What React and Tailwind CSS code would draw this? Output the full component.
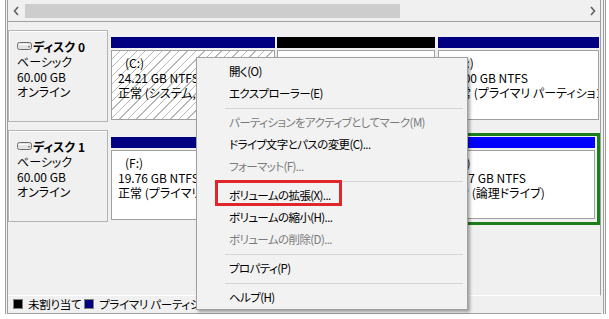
const MENU = [
  { label: "開く(O)" },
  { label: "エクスプローラー(E)" },
  { sep: true },
  { label: "パーティションをアクティブとしてマーク(M)", disabled: true },
  { label: "ドライブ文字とパスの変更(C)..." },
  { label: "フォーマット(F)...", disabled: true },
  { sep: true },
  { label: "ボリュームの拡張(X)..." },
  { label: "ボリュームの縮小(H)..." },
  { label: "ボリュームの削除(D)...", disabled: true },
  { sep: true },
  { label: "プロパティ(P)" },
  { sep: true },
  { label: "ヘルプ(H)" },
];

const LEGEND = [
  { label: "未割り当て", color: "bg-black" },
  { label: "プライマリ パーティション", color: "bg-[#000080]" },
  { label: "拡張パーティション", color: "bg-[#1b7d1b]" },
  { label: "空き領域", color: "bg-[#80ff80]" },
  { label: "論理ドライブ", color: "bg-[#0000ff]" },
];

const HATCH =
  "bg-[repeating-linear-gradient(135deg,#ffffff_0px,#ffffff_5px,#b8b8b8_5px,#b8b8b8_6px)]";

export default function App() {
  return (
    <div className="relative h-[319px] w-[609px] overflow-hidden bg-white text-black [font-family:'Noto_Sans_CJK_JP',sans-serif] [font-feature-settings:'palt']">
      <div className="ml-[5px] flex h-[314px] w-[601px] flex-col border-x-[3px] border-double border-[#a0a0a0] bg-[#f0f0f0]">
        <ScrollBar />

        <div className="mr-[2px] flex h-[275px] flex-col border-r border-b border-r-[#a0a0a0] border-b-white pt-[8px]">
          <div className="flex h-[92px] items-start">
            <DiskLabel name="ディスク 0" />
            <div className="ml-[3px] flex">
              <Partition
                className="w-[164px]"
                bar="bg-[#000080]"
                body={`px-[6px] ${HATCH}`}
                lines={["(C:)", "24.21 GB NTFS", "正常 (システム, ブート, ページ ファイル, アクティブ, クラッシュ ダンプ, プライマリ パーティション)"]}
              />
              <Partition
                className="ml-[2px] w-[158px]"
                bar="bg-black"
                body="bg-white px-[6px]"
                lines={["", "15.00 GB", "未割り当て"]}
              />
              <Partition
                className="ml-[3px] w-[161px]"
                bar="bg-[#000080]"
                body="bg-white pl-[8px] pr-[6px]"
                lines={["(D:)", "10.00 GB NTFS", "正常 (プライマリ パーティション)"]}
              />
            </div>
          </div>

          <div className="mt-[8px] flex h-[92px] items-start">
            <DiskLabel name="ディスク 1" />
            <div className="ml-[3px] flex items-start">
              <Partition
                className="w-[324px]"
                bar="bg-[#000080]"
                body="bg-white px-[6px]"
                lines={["(F:)", "19.76 GB NTFS", "正常 (プライマリ パーティション)"]}
              />
              <div className="ml-[2px] mt-[3px] flex h-[92px] w-[163px] flex-col border-[3px] border-[#1b7d1b] bg-[#f0f0f0] px-[2px] pt-[1px]">
                <div className="h-[11px] bg-[#0000ff]" />
                <PartBody
                  className="h-[69px] bg-white pl-[2px] pr-[6px]"
                  lines={["(E:)", "40.17 GB NTFS", "正常 (論理ドライブ)"]}
                />
              </div>
            </div>
          </div>
        </div>

        <div className="mr-[2px] flex flex-1 items-center border-b border-[#a0a0a0] pl-[5px] text-[11.5px] tracking-[-0.3px] whitespace-nowrap">
          {LEGEND.map((l) => (
            <div key={l.label} className="mr-[3px] flex items-center">
              <span className={`mr-[5px] h-[10px] w-[10px] border border-[#808080] ${l.color}`} />
              {l.label}
            </div>
          ))}
        </div>
      </div>

      <ContextMenu />
    </div>
  );
}

function ScrollBar() {
  return (
    <div className="mr-[2px] flex h-[22px] shrink-0 items-center border-r border-b border-[#a0a0a0] bg-[#f0f0f0]">
      <div className="flex w-[15px] justify-center">
        <svg width="6" height="10" viewBox="0 0 6 10">
          <path d="M5 1 L1.5 5 L5 9" fill="none" stroke="#606060" strokeWidth="1.6" />
        </svg>
      </div>
      <div className="ml-[2px] h-[14px] w-[375px] bg-[#cdcdcd]" />
      <div className="flex-1" />
      <div className="flex w-[15px] justify-center">
        <svg width="6" height="10" viewBox="0 0 6 10">
          <path d="M1 1 L4.5 5 L1 9" fill="none" stroke="#606060" strokeWidth="1.6" />
        </svg>
      </div>
    </div>
  );
}

function DiskIcon() {
  return (
    <svg width="15" height="8" viewBox="0 0 15 8" className="mr-px">
      <rect x="0.5" y="0.5" width="14" height="7" rx="2" fill="#e4e4e4" stroke="#6e6e6e" />
      <rect x="2" y="2" width="9" height="1" fill="#ffffff" />
      <rect x="11" y="4" width="2" height="1.5" fill="#8a8a8a" />
    </svg>
  );
}

function DiskLabel({ name }) {
  return (
    <div className="h-[92px] w-[100px] shrink-0 border border-[#b4b4b4] bg-[#f0f0f0] pl-[8px] pt-[7px] text-[12px] leading-[15px] shadow-[inset_1px_1px_0_#ffffff]">
      <div className="flex h-[16px] items-center font-bold">
        <DiskIcon />
        <span>{name}</span>
      </div>
      <div>ベーシック</div>
      <div>60.00 GB</div>
      <div>オンライン</div>
    </div>
  );
}

function PartBody({ className, lines }) {
  return (
    <div
      className={`mt-[2px] overflow-hidden border border-[#a0a0a0] pt-[4px] text-[12px] leading-[15px] whitespace-nowrap ${className}`}
    >
      <div className="h-[15px] pl-[7px]">{lines[0]}</div>
      <div>{lines[1]}</div>
      <div>{lines[2]}</div>
    </div>
  );
}

function Partition({ className, bar, body, lines }) {
  return (
    <div className={`flex shrink-0 flex-col pt-[7px] ${className}`}>
      <div className={`h-[11px] ${bar}`} />
      <PartBody className={`h-[70px] ${body}`} lines={lines} />
    </div>
  );
}

function ContextMenu() {
  return (
    <div className="absolute left-[196px] top-[57px] w-[272px] border border-[#a0a0a0] bg-[#f2f2f2] pt-[3px] text-[11.5px] tracking-[-0.6px] whitespace-nowrap shadow-[2px_2px_3px_rgba(0,0,0,0.35)]">
      {MENU.map((item, i) =>
        item.sep ? (
          <div key={i} className="flex h-[7px] items-center pl-[28px] pr-[4px]">
            <div className="h-px w-full bg-[#d4d4d4]" />
          </div>
        ) : (
          <div
            key={i}
            className={`flex h-[22px] items-center pl-[32px] ${item.disabled ? "text-[#7a7a7a]" : "text-black"}`}
          >
            {item.label}
          </div>
        )
      )}
      <div className="absolute left-[18px] top-[122px] h-[26px] w-[127px] border-[3px] border-[#e0262d]" />
    </div>
  );
}
